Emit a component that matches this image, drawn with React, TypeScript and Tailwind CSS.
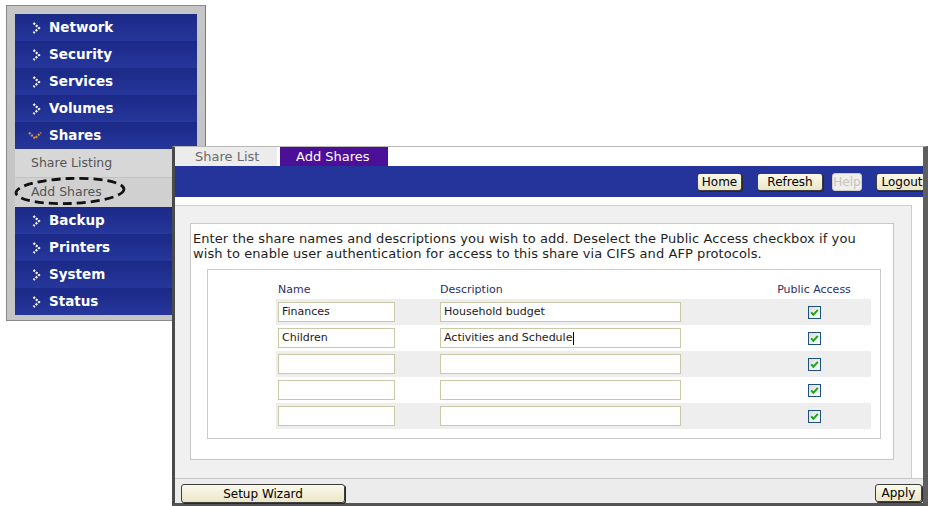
import React from 'react';

const menuTop = ['Network', 'Security', 'Services', 'Volumes'];
const menuBottom = ['Backup', 'Printers', 'System', 'Status'];

const rows = [
  { name: 'Finances', desc: 'Household budget' },
  { name: 'Children', desc: 'Activities and Schedule', cursor: true },
  { name: '', desc: '' },
  { name: '', desc: '' },
  { name: '', desc: '' },
];

function Chevron() {
  return (
    <svg width="9" height="12" viewBox="0 0 9 12" className="flex-none">
      <path d="M1.5 1 L7 6 L1.5 11" stroke="#ffffff" strokeWidth="2.2" fill="none" strokeDasharray="2 1.3" />
    </svg>
  );
}

function OpenChevron() {
  return (
    <svg width="14" height="9" viewBox="0 0 14 9" className="-ml-[4px] mr-[-1px] flex-none">
      <path d="M1 1.5 L7 7.5 L13 1.5" stroke="#d98b3f" strokeWidth="2.2" fill="none" strokeDasharray="2 1.2" />
    </svg>
  );
}

function MenuItem({ label, open }: { label: string; open?: boolean }) {
  return (
    <div className="flex h-[27px] items-center gap-[8px] bg-gradient-to-b from-[#1b2987] to-[#26369b] pl-[17px] text-[13.5px] font-bold text-white">
      {open ? <OpenChevron /> : <Chevron />}
      <span>{label}</span>
    </div>
  );
}

function CheckBox() {
  return (
    <svg width="13" height="13" viewBox="0 0 13 13">
      <defs>
        <linearGradient id="cb" x1="0" y1="0" x2="1" y2="1">
          <stop offset="0" stopColor="#dcdcd6" />
          <stop offset="1" stopColor="#ffffff" />
        </linearGradient>
      </defs>
      <rect x="0.5" y="0.5" width="12" height="12" fill="url(#cb)" stroke="#1c5180" />
      <path d="M3.2 6.4 L5.4 8.8 L9.8 3.9" stroke="#21a121" strokeWidth="2" fill="none" />
    </svg>
  );
}

function Btn({ label, className, disabled }: { label: string; className?: string; disabled?: boolean }) {
  return (
    <div
      className={
        'flex flex-none items-center justify-center rounded-[3px] border text-[12px] ' +
        (disabled
          ? 'border-[#cfcdc4] bg-[#f1efe9] text-[#c4c4c4] '
          : 'border-[#3e3e3e] bg-gradient-to-b from-[#fbf9ec] to-[#ebe6c8] text-black shadow-[1px_1px_0_#2a2a2a] ') +
        (className || '')
      }
    >
      {label}
    </div>
  );
}

export default function App() {
  return (
    <div className="relative h-[506px] w-[928px] overflow-hidden bg-white font-['DejaVu_Sans',sans-serif]">
      {/* side menu window */}
      <div className="absolute left-[6px] top-[5px] h-[316px] w-[200px] border border-[#8a8a8a] border-r-[#7a7a7a] bg-[#c5c5c5] pb-[5px] pl-[8px] pr-[8px] pt-[8px]">
        <div className="flex flex-col">
          {menuTop.map((m) => (
            <MenuItem key={m} label={m} />
          ))}
          <MenuItem label="Shares" open />
          <div className="flex h-[29px] items-center border-b border-[#c2c2c2] bg-[#d7d7d7] pl-[16px] text-[12.5px] text-[#555]">
            Share Listing
          </div>
          <div className="relative flex h-[29px] items-center bg-[#d0d0d0] pl-[16px] text-[12.5px] text-[#555]">
            Add Shares
            <svg width="116" height="32" viewBox="0 0 116 32" className="absolute left-[-2px] top-[-3px]">
              <ellipse
                cx="57"
                cy="16"
                rx="54"
                ry="12.5"
                fill="none"
                stroke="#111"
                strokeWidth="2.8"
                strokeDasharray="9 5"
                transform="rotate(-2 57 16)"
              />
            </svg>
          </div>
          {menuBottom.map((m) => (
            <MenuItem key={m} label={m} />
          ))}
        </div>
      </div>

      {/* main window */}
      <div className="absolute left-[172px] top-[146px] flex h-[360px] w-[756px] flex-col border-b-[3px] border-l-[3px] border-r-[5px] border-t border-b-[#555] border-l-[#4a4a4a] border-r-[#5e5e5e] border-t-[#b8b8b8] bg-white">
        {/* tabs */}
        <div className="flex h-[19px] flex-none items-stretch text-[13px]">
          <div className="flex w-[102px] items-center bg-[#ececec] pl-[20px] text-[#6a6a6a]">Share List</div>
          <div className="ml-[3px] flex w-[108px] items-center bg-[#4c0f98] pl-[16px] text-white">Add Shares</div>
        </div>

        {/* blue toolbar */}
        <div className="flex h-[31px] flex-none items-center overflow-hidden bg-[#24349a] pl-[522px]">
          <Btn label="Home" className="h-[18px] w-[45px]" />
          <Btn label="Refresh" className="ml-[15px] h-[18px] w-[66px]" />
          <Btn label="Help" disabled className="ml-[9px] h-[18px] w-[30px]" />
          <Btn label="Logout" className="ml-[14px] h-[18px] w-[52px]" />
        </div>

        {/* content */}
        <div className="flex flex-1 flex-col bg-white pt-[8px]">
          <div className="mr-[11px] flex-1 border-r border-t border-[#cfcfcf] bg-[#f0f0f0] pb-[18px] pl-[15px] pr-[17px] pt-[17px]">
            <div className="h-full border border-[#c8c8c8] bg-white">
              <p className="whitespace-nowrap px-[2px] pt-[7px] text-[13px] leading-[15px] tracking-[0.08px] text-[#1e1e1e]">
                Enter the share names and descriptions you wish to add. Deselect the Public Access checkbox if you
                <br />
                wish to enable user authentication for access to this share via CIFS and AFP protocols.
              </p>
              <div className="ml-[16px] mr-[12px] mt-[8px] h-[170px] border border-[#cccccc] bg-white pl-[68px] pr-[9px] pt-[12px]">
                <div className="flex h-[17px] items-center text-[11px] text-[#2d2d66]">
                  <span className="ml-[2px] w-[162px]">Name</span>
                  <span className="flex-1">Description</span>
                  <span className="w-[114px] text-center">Public Access</span>
                </div>
                {rows.map((r, i) => (
                  <div
                    key={i}
                    className={'flex h-[26px] items-center ' + (i % 2 === 0 ? 'bg-[#eeeeee]' : 'bg-white')}
                  >
                    <div className="ml-[2px] flex h-[20px] w-[117px] items-center border border-[#c9c9a8] bg-white px-[3px] text-[11px] text-[#1a1a1a]">
                      {r.name}
                    </div>
                    <div className="ml-[45px] flex h-[20px] w-[241px] items-center border border-[#c9c9a8] bg-white px-[3px] text-[11px] text-[#1a1a1a]">
                      {r.desc}
                      {r.cursor && <span className="ml-px h-[13px] w-px bg-black" />}
                    </div>
                    <div className="flex-1" />
                    <div className="flex w-[114px] justify-center">
                      <CheckBox />
                    </div>
                  </div>
                ))}
              </div>
            </div>
          </div>
        </div>

        {/* bottom bar */}
        <div className="flex h-[25px] flex-none items-start justify-between border-t border-[#c8c8c8] bg-[#ececec] pl-[6px] pr-[1px] pt-[5px]">
          <Btn label="Setup Wizard" className="h-[19px] w-[164px]" />
          <Btn label="Apply" className="h-[18px] w-[47px]" />
        </div>
      </div>
    </div>
  );
}
